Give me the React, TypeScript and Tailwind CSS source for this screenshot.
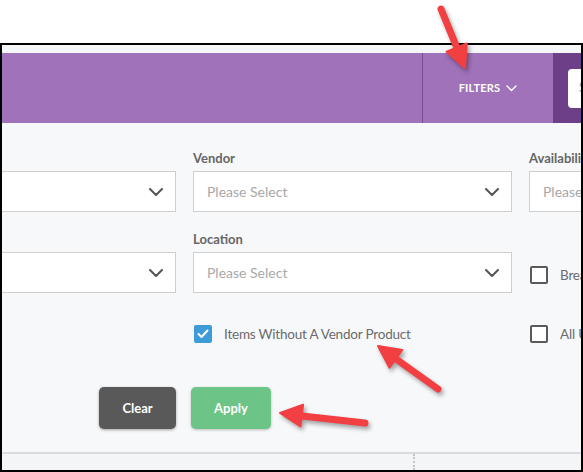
import React from 'react';

const Chevron: React.FC<{ className?: string }> = ({ className }) => (
  <svg width="14" height="8" viewBox="0 0 14 8" className={className} fill="none">
    <polyline points="1,1 7,7 13,1" stroke="currentColor" strokeWidth="2" strokeLinecap="round" strokeLinejoin="round" />
  </svg>
);

const SelectBox: React.FC<{ placeholder?: string }> = ({ placeholder }) => (
  <div className="h-[41px] bg-white border border-[#cfcfcf] flex items-center justify-between pl-[13px] pr-[12px]">
    <span className="text-[14px] text-[#a8a8a8]">{placeholder}</span>
    <Chevron className="text-[#555]" />
  </div>
);

const Field: React.FC<{ label?: string; placeholder?: string }> = ({ label, placeholder }) => (
  <div className="flex flex-col">
    <div className="h-[16px] text-[13px] leading-[16px] font-bold text-[#666] mb-[5px] whitespace-nowrap">{label}</div>
    <SelectBox placeholder={placeholder} />
  </div>
);

const Check: React.FC<{ checked?: boolean; label: string }> = ({ checked, label }) => (
  <div className="flex items-center gap-[12px] whitespace-nowrap">
    {checked ? (
      <div className="w-[18px] h-[18px] rounded-[2px] bg-[#3d9bd8] flex items-center justify-center">
        <svg width="12" height="10" viewBox="0 0 12 10" fill="none">
          <polyline points="1.5,5 4.5,8 10.5,1.5" stroke="white" strokeWidth="2" strokeLinecap="round" strokeLinejoin="round" />
        </svg>
      </div>
    ) : (
      <div className="w-[18px] h-[18px] rounded-[2px] border-2 border-[#5a5a5a] bg-white" />
    )}
    <span className="text-[13.5px] tracking-[-0.2px] text-[#6b6b6b]">{label}</span>
  </div>
);

const Arrows: React.FC = () => (
  <svg
    width="583"
    height="472"
    viewBox="0 0 583 472"
    className="absolute inset-0 pointer-events-none"
    style={{ filter: 'drop-shadow(2px 3px 2px rgba(0,0,0,0.35))' }}
  >
    <g fill="#f23f42" stroke="#f23f42" strokeLinecap="round" strokeLinejoin="round">
      <line x1="441" y1="9" x2="457" y2="48" strokeWidth="7" />
      <polygon points="465,68 446.5,51.7 466.9,43.5" strokeWidth="2" />
      <line x1="438" y1="389" x2="396" y2="359" strokeWidth="7" />
      <polygon points="378,346 402.3,349.9 389.5,367.7" strokeWidth="2" />
      <line x1="365" y1="423" x2="302" y2="416" strokeWidth="7" />
      <polygon points="280,413 303.1,404.7 300.5,426.5" strokeWidth="2" />
    </g>
  </svg>
);

export default function App() {
  return (
    <div className="relative w-[583px] h-[472px] bg-white overflow-hidden" style={{ fontFamily: 'Lato, "Open Sans", sans-serif' }}>
      <div className="h-[43px]" />
      <div className="h-[429px] border-2 border-black flex flex-col overflow-hidden bg-[#f7f8fa]">
        <div className="h-[8px] bg-[#f5f6f8]" />
        {/* header bar */}
        <div className="h-[70px] flex bg-[#a072b9] shrink-0">
          <div className="w-[421px] shrink-0 border-r border-[#7a4a95]" />
          <div className="w-[130px] shrink-0 flex items-center justify-center gap-[6px] text-white">
            <span className="text-[11px] font-bold tracking-[0.2px]">FILTERS</span>
            <svg width="11" height="7" viewBox="0 0 11 7" fill="none">
              <polyline points="1,1 5.5,5.5 10,1" stroke="white" strokeWidth="1.4" strokeLinecap="round" strokeLinejoin="round" />
            </svg>
          </div>
          <div className="flex-1 min-w-0 bg-[#6e3f89] flex items-center pl-[15px] overflow-hidden">
            <div className="h-[39px] w-[60px] shrink-0 bg-white rounded-l-[4px] flex items-center pl-[11px] text-[13px] text-[#999]">S</div>
          </div>
        </div>

        {/* filter form */}
        <div className="flex-1 pt-[27px]">
          <div className="ml-[-145px] grid grid-cols-[319px_319px_319px] gap-x-[17px]">
            <Field label="Category" placeholder="" />
            <Field label="Vendor" placeholder="Please Select" />
            <Field label="Availability" placeholder="Please Select" />
          </div>
          <div className="ml-[-145px] mt-[19px] grid grid-cols-[319px_319px_319px] gap-x-[17px]">
            <Field label="Department" placeholder="" />
            <Field label="Location" placeholder="Please Select" />
            <div className="pt-[34px] pl-[1px]">
              <Check label="Break Items" />
            </div>
          </div>
          <div className="ml-[-145px] mt-[31px] grid grid-cols-[319px_319px_319px] gap-x-[17px]">
            <div />
            <div className="pl-[1px]">
              <Check checked label="Items Without A Vendor Product" />
            </div>
            <div className="pl-[1px]">
              <Check label="All Units" />
            </div>
          </div>
          <div className="mt-[43px] ml-[97px] flex gap-[15px]">
            <button className="w-[77px] h-[42px] rounded-[5px] bg-[#595959] text-white text-[13px] font-bold shadow-[0_1px_3px_rgba(0,0,0,0.35)]">
              Clear
            </button>
            <button className="w-[80px] h-[42px] rounded-[5px] bg-[#6cc486] text-white text-[13px] font-bold shadow-[0_1px_3px_rgba(0,0,0,0.25)]">
              Apply
            </button>
          </div>
        </div>

        {/* table top */}
        <div className="h-[2px] bg-[#d9dbe0]" />
        <div className="h-[16px] bg-[#f4f5f7] flex">
          <div className="w-[411px]" />
          <div className="border-l-2 border-dotted border-[#c4c4c4]" />
        </div>
      </div>
      <Arrows />
    </div>
  );
}
